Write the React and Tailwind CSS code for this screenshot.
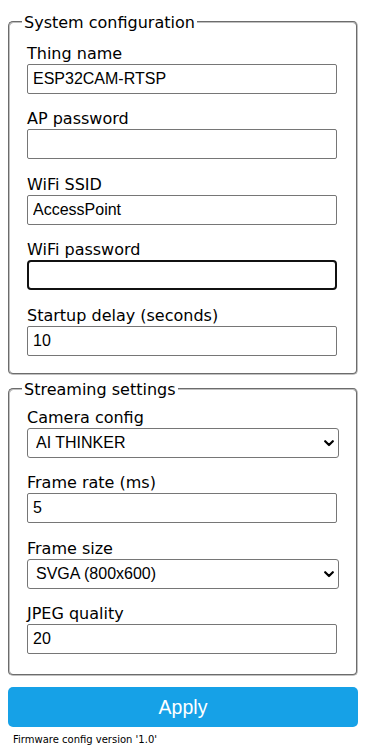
import React from 'react';

const LABEL = 'block h-[19px] leading-[19px] text-[16px] text-black';
const INPUT =
  "block mt-[1px] h-[30px] w-[310px] border border-[#767676] rounded-[2px] px-[5px] bg-white text-[16px] text-black font-['Liberation_Sans',Arial,sans-serif] outline-none";
const INPUT_FOCUS =
  "block mt-[1px] h-[30px] w-[310px] border-2 border-[#111111] rounded-[4px] px-[4px] bg-white text-[16px] text-black font-['Liberation_Sans',Arial,sans-serif] outline-none";

const Chevron = () => (
  <svg width="10" height="7" viewBox="0 0 10 7" className="pointer-events-none absolute right-[5px] top-[12px]">
    <polyline points="1.2,1.2 5,5 8.8,1.2" fill="none" stroke="#000" strokeWidth="2.2" strokeLinecap="round" strokeLinejoin="round" />
  </svg>
);

const TextRow = ({ label, value, focused }) => (
  <div>
    <label className={LABEL}>{label}</label>
    <input type="text" defaultValue={value} className={focused ? INPUT_FOCUS : INPUT} />
  </div>
);

const SelectRow = ({ label, value, options }) => (
  <div>
    <label className={LABEL}>{label}</label>
    <div className="relative mt-[1px]">
      <select
        defaultValue={value}
        className="block h-[30px] w-full appearance-none border border-[#767676] rounded-[3px] pl-[8px] pr-[24px] bg-white text-[16px] text-black font-['Liberation_Sans',Arial,sans-serif] outline-none"
      >
        {options.map(o => (
          <option key={o}>{o}</option>
        ))}
      </select>
      <Chevron />
    </div>
  </div>
);

export default function App() {
  return (
    <div className="min-h-[751px] bg-white px-2 pt-[12.5px] font-['DejaVu_Sans',Verdana,sans-serif] text-black">
      {/* System configuration */}
      <fieldset className="border-2 [border-style:groove] border-[#c0c0c0] rounded-[5px] px-[12px] pt-[12px] pb-[17.5px]">
        <legend className="px-[2px] leading-[19px] text-[16px]">System configuration</legend>
        <div className="flex flex-col gap-[15.5px] px-[5px]">
          <TextRow label="Thing name" value="ESP32CAM-RTSP" />
          <TextRow label="AP password" value="" />
          <TextRow label="WiFi SSID" value="AccessPoint" />
          <TextRow label="WiFi password" value="" focused />
          <TextRow label="Startup delay (seconds)" value="10" />
        </div>
      </fieldset>

      {/* Streaming settings */}
      <fieldset className="mt-[4.5px] border-2 [border-style:groove] border-[#c0c0c0] rounded-[5px] px-[12px] pt-[9px] pb-[20px]">
        <legend className="px-[2px] leading-[19px] text-[16px]">Streaming settings</legend>
        <div className="flex flex-col gap-[15.5px] px-[5px]">
          <SelectRow label="Camera config" value="AI THINKER" options={['AI THINKER', 'M5STACK', 'WROVER KIT', 'ESP EYE', 'TTGO T-CAMERA']} />
          <TextRow label="Frame rate (ms)" value="5" />
          <SelectRow
            label="Frame size"
            value="SVGA (800x600)"
            options={['QQVGA (160x120)', 'QVGA (320x240)', 'CIF (400x296)', 'VGA (640x480)', 'SVGA (800x600)', 'XGA (1024x768)', 'SXGA (1280x1024)', 'UXGA (1600x1200)']}
          />
          <TextRow label="JPEG quality" value="20" />
        </div>
      </fieldset>

      <button
        type="button"
        className="mt-[11px] block h-[40px] w-full rounded-[5px] bg-[#16a1e7] text-center text-[19.5px] leading-[40px] text-white font-['Liberation_Sans',Arial,sans-serif]"
      >
        Apply
      </button>

      <div className="px-[5px] pt-[7px] text-[10px] leading-[12px]">Firmware config version '1.0'</div>
    </div>
  );
}
